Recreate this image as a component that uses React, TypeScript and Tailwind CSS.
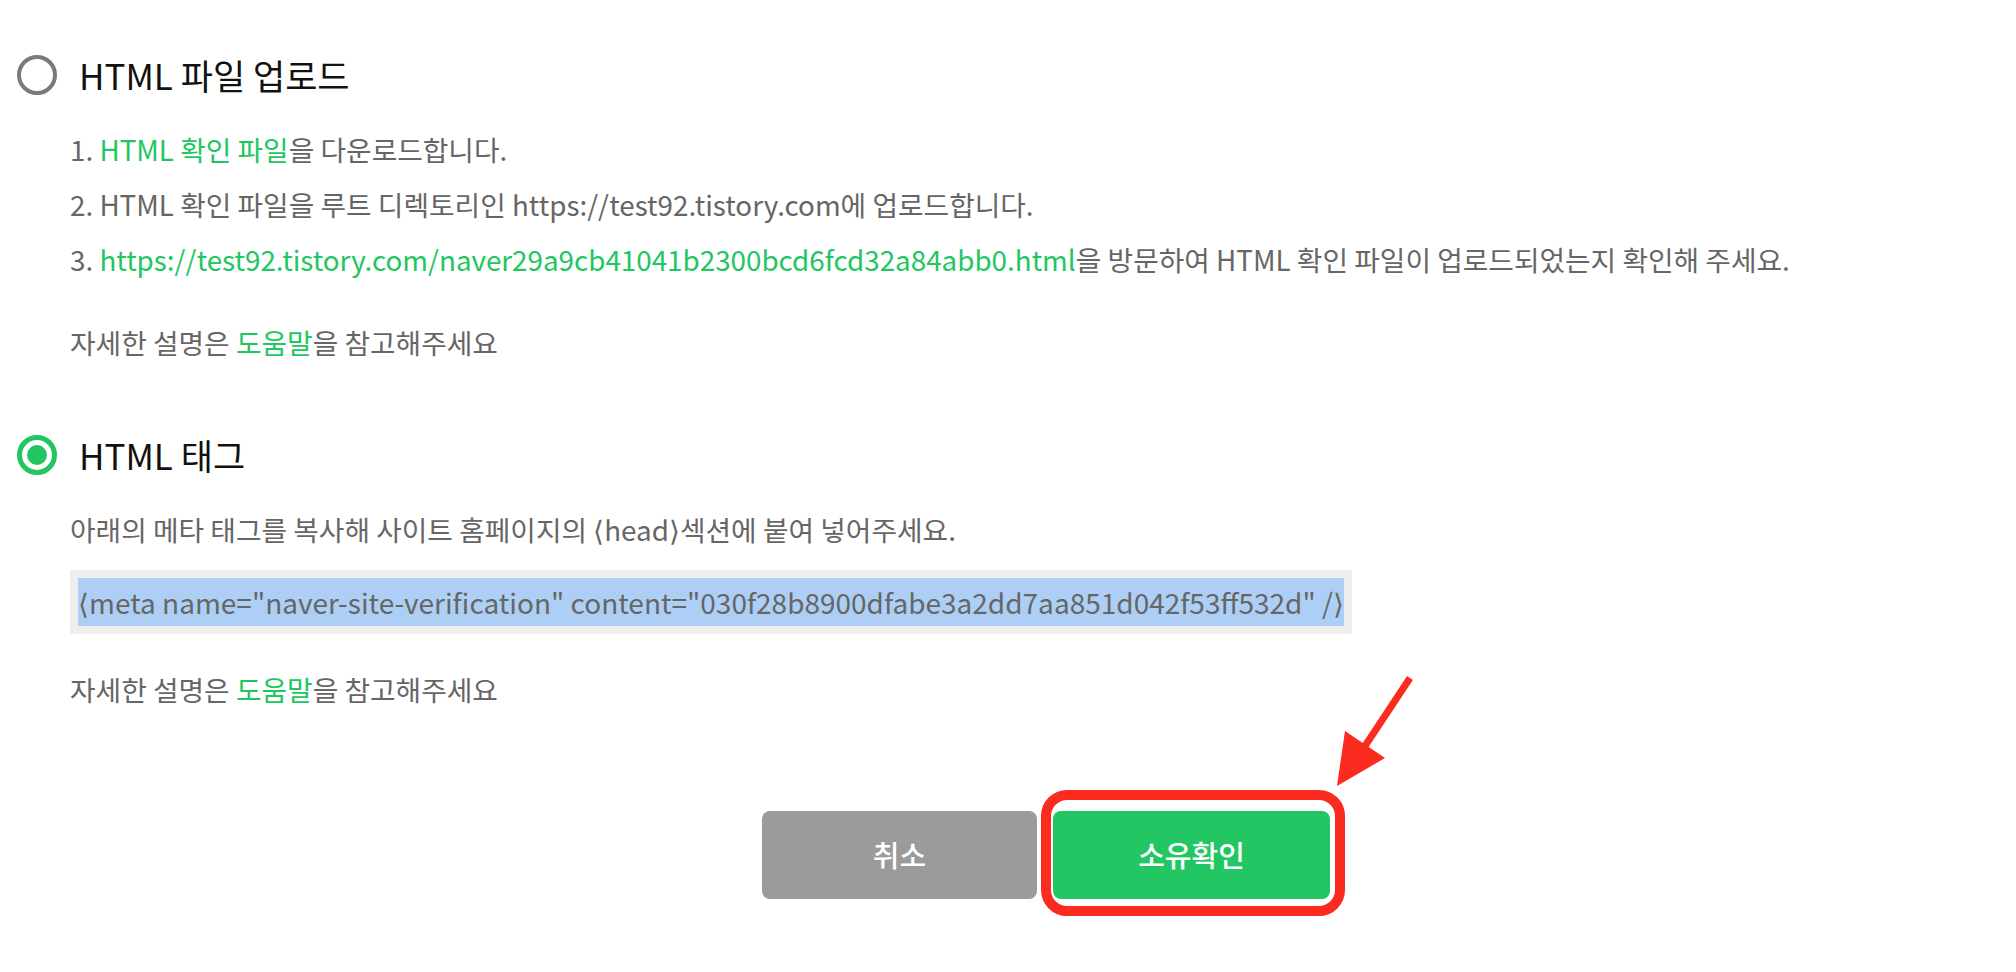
import React from "react";

const Radio = ({ checked }: { checked?: boolean }) =>
  checked ? (
    <span className="flex h-[40px] w-[40px] items-center justify-center rounded-full border-[5px] border-[#22c661]">
      <span className="block h-[20px] w-[20px] rounded-full bg-[#22c661]" />
    </span>
  ) : (
    <span className="block h-[40px] w-[40px] rounded-full border-[4px] border-[#7a7a7a]" />
  );

const Green = ({ children }: { children: React.ReactNode }) => (
  <span className="text-[#22c661]">{children}</span>
);

const HelpLine = ({ className }: { className: string }) => (
  <p className={className}>
    자세한 설명은 <Green>도움말</Green>을 참고해주세요
  </p>
);

export default function App() {
  return (
    <div className="h-[972px] w-full bg-white font-['Noto_Sans_CJK_KR',sans-serif] text-[27.8px] text-[#666]">
      <div className="pl-[17px] pt-[55px]">
        {/* html file upload */}
        <div className="flex items-center gap-[22px]">
          <Radio />
          <span className="text-[35px] leading-[40px] text-[#111]">HTML 파일 업로드</span>
        </div>
        <ol className="ml-[53px] mt-[27px] leading-[55px]">
          <li>
            1. <Green>HTML 확인 파일</Green>을 다운로드합니다.
          </li>
          <li>2. HTML 확인 파일을 루트 디렉토리인 https://test92.tistory.com에 업로드합니다.</li>
          <li>
            3. <Green>https://test92.tistory.com/naver29a9cb41041b2300bcd6fcd32a84abb0.html</Green>을 방문하여
            HTML 확인 파일이 업로드되었는지 확인해 주세요.
          </li>
        </ol>
        <HelpLine className="ml-[53px] mt-[28px] leading-[55px]" />

        {/* html tag */}
        <div className="mt-[65px] flex items-center gap-[22px]">
          <Radio checked />
          <span className="text-[35px] leading-[40px] text-[#111]">HTML 태그</span>
        </div>
        <p className="ml-[53px] mt-[27px] leading-[55px]">
          아래의 메타 태그를 복사해 사이트 홈페이지의 ⟨head⟩섹션에 붙여 넣어주세요.
        </p>
        <div className="ml-[53px] mt-[13px] w-[1282px] bg-[#eeeeee] p-[8px]">
          <div className="h-[48px] whitespace-nowrap bg-[#aecff5] text-[28px] leading-[48px]">
            ⟨meta name="naver-site-verification" content="030f28b8900dfabe3a2dd7aa851d042f53ff532d" /⟩
          </div>
        </div>
        <HelpLine className="ml-[53px] mt-[28px] leading-[55px]" />
      </div>

      <div className="mt-[94px] flex gap-[16px] pl-[762px]">
        <button className="h-[88px] w-[275px] rounded-[8px] bg-[#9b9b9b] text-[29px] font-medium text-white">
          취소
        </button>
        <div className="relative">
          <button className="h-[88px] w-[277px] rounded-[8px] bg-[#22c763] text-[29px] font-medium text-white">
            소유확인
          </button>
          <span className="pointer-events-none absolute -bottom-[17px] -left-[12px] -right-[15px] -top-[21px] rounded-[26px] border-[10px] border-[#fb2b1f]" />
          <svg
            className="absolute left-[277px] top-[-140px]"
            width="100"
            height="130"
            viewBox="0 0 100 130"
          >
            <line x1="80" y1="7" x2="33" y2="78" stroke="#fb2b1f" strokeWidth="7" />
            <polygon points="7,115 15,60 55,87" fill="#fb2b1f" />
          </svg>
        </div>
      </div>
    </div>
  );
}
